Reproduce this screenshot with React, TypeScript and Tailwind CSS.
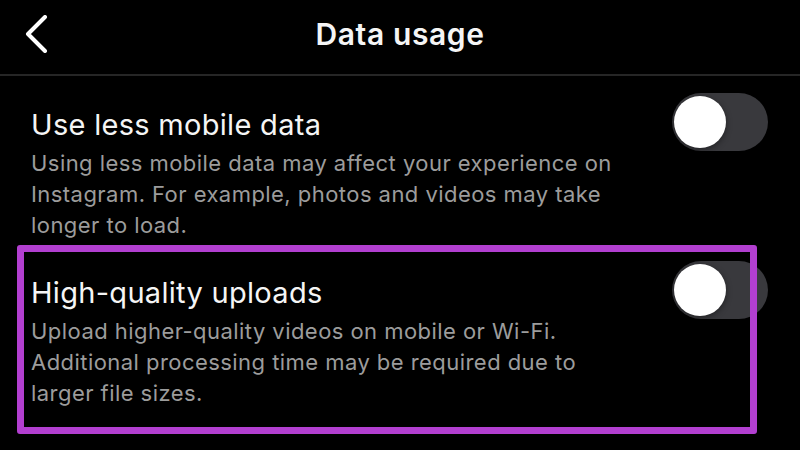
import { useState } from "react";

interface Setting {
  id: string;
  title: string;
  lines: string[];
  highlighted?: boolean;
}

const settings: Setting[] = [
  {
    id: "less-data",
    title: "Use less mobile data",
    lines: [
      "Using less mobile data may affect your experience on",
      "Instagram. For example, photos and videos may take",
      "longer to load.",
    ],
  },
  {
    id: "hq-uploads",
    title: "High-quality uploads",
    lines: [
      "Upload higher-quality videos on mobile or Wi-Fi.",
      "Additional processing time may be required due to",
      "larger file sizes.",
    ],
    highlighted: true,
  },
];

function Toggle({ on, onChange }: { on: boolean; onChange: () => void }) {
  return (
    <button
      onClick={onChange}
      className={`relative shrink-0 w-[96px] h-[58px] rounded-full ${
        on ? "bg-[#34c759]" : "bg-[#39393d]"
      }`}
    >
      <span
        className={`absolute top-[3px] w-[52px] h-[52px] rounded-full bg-white shadow-[0_2px_6px_rgba(0,0,0,0.4)] ${
          on ? "left-[41px]" : "left-[2px]"
        }`}
      />
    </button>
  );
}

export default function App() {
  const [values, setValues] = useState<Record<string, boolean>>({});

  return (
    <div className="w-[800px] h-[450px] overflow-hidden bg-black text-[#f5f5f5] font-['Inter',sans-serif]">
      <header className="relative h-[76px] flex items-center justify-center border-b-2 border-[#262626]">
        <button className="absolute left-[24px] top-[15px] w-[26px] h-[38px]">
          <svg viewBox="0 0 26 38" className="w-[26px] h-[38px]" fill="none">
            <path
              d="M21 2 L4 19 L21 36"
              stroke="white"
              strokeWidth="4"
              strokeLinecap="round"
              strokeLinejoin="round"
            />
          </svg>
        </button>
        <h1 className="text-[30px] font-semibold tracking-[0.6px] mt-[-5px]">Data usage</h1>
      </header>

      <div className="flex flex-col gap-[20px] pt-[17px]">
        {settings.map((s) => (
          <div key={s.id} className="relative flex justify-between pl-[31px] pr-[32px]">
            <div className="flex flex-col pt-[3px]">
              <div className="text-[29px] tracking-[0.3px] leading-[58px]">{s.title}</div>
              <p className="mt-[-6px] text-[22px] tracking-[0.45px] leading-[31px] text-[#9c9c9c]">
                {s.lines.map((line) => (
                  <span key={line} className="block whitespace-nowrap">
                    {line}
                  </span>
                ))}
              </p>
            </div>
            <Toggle
              on={!!values[s.id]}
              onChange={() => setValues((v) => ({ ...v, [s.id]: !v[s.id] }))}
            />
            {s.highlighted && (
              <div className="pointer-events-none absolute left-[17px] right-[43px] top-[-16px] h-[189px] border-[7px] border-[#b23fd0] rounded-[3px]" />
            )}
          </div>
        ))}
      </div>
    </div>
  );
}
